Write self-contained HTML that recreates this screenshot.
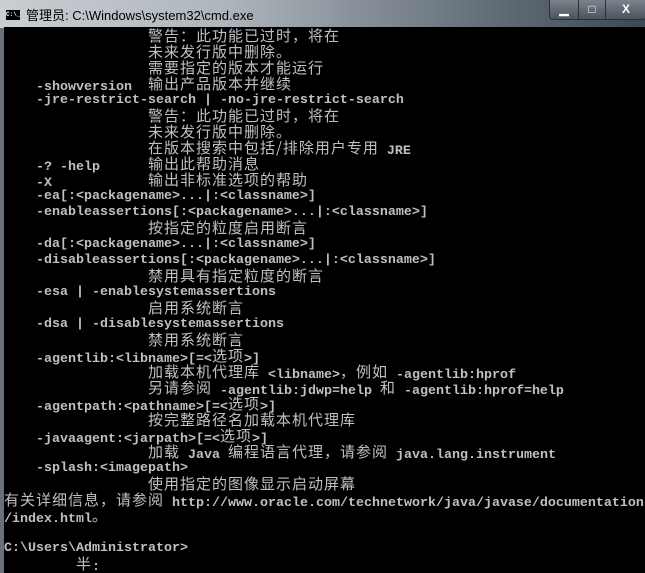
<!DOCTYPE html>
<html><head><meta charset="utf-8"><style>
html,body{margin:0;padding:0;width:645px;height:571px;overflow:hidden;background:#6a7078}
.title{position:absolute;left:0;top:0;width:645px;height:28px;background:linear-gradient(90deg,#c9ced3 0%,#aeb5bc 35%,#6d7781 70%,#3e4852 100%)}
.title .t{position:absolute;left:26px;top:5px;font:13px "Liberation Sans","Noto Sans CJK SC",sans-serif;color:#000}
.icon{position:absolute;left:5px;top:9px;width:14px;height:10px;background:#000;border:1px solid #ccc;color:#fff;font:bold 6px "Liberation Mono",monospace;line-height:10px}
.btns{position:absolute;right:-2px;top:0;height:19px;width:96px;border:1px solid #2a3038;border-top:none;border-radius:0 0 4px 4px;background:linear-gradient(#7a838c,#4b545d)}
.b{position:absolute;top:0;height:19px;color:#fff;font:bold 12px "Liberation Sans",sans-serif;text-align:center;line-height:18px}
.con{position:absolute;left:4px;top:27px;width:645px;height:544px;background:#000;overflow:hidden;padding-top:2px}
.con div{height:16px;overflow:visible;font:bold 13.33px/16px "Liberation Mono",monospace;color:#c0c0c0;white-space:pre}
.c{font:15px/16px "Noto Sans CJK SC","WenQuanYi Zen Hei",sans-serif;letter-spacing:1px;font-weight:normal;vertical-align:baseline;position:relative;top:-1px}
</style></head><body>
<div class="title"><div class="icon">C:\_</div><div class="t">管理员: C:\Windows\system32\cmd.exe</div>
<div class="btns"><div class="b" style="left:0;width:28px;border-right:1px solid #2a3038">▁</div><div class="b" style="left:29px;width:26px;border-right:1px solid #2a3038">□</div><div class="b" style="left:56px;width:40px">X</div></div></div>
<div class="con">
<div>                  <span class="c">警告：此功能已过时，将在</span></div>
<div>                  <span class="c">未来发行版中删除。</span></div>
<div>                  <span class="c">需要指定的版本才能运行</span></div>
<div>    -showversion  <span class="c">输出产品版本并继续</span></div>
<div>    -jre-restrict-search | -no-jre-restrict-search</div>
<div>                  <span class="c">警告：此功能已过时，将在</span></div>
<div>                  <span class="c">未来发行版中删除。</span></div>
<div>                  <span class="c">在版本搜索中包括/排除用户专用</span> JRE</div>
<div>    -? -help      <span class="c">输出此帮助消息</span></div>
<div>    -X            <span class="c">输出非标准选项的帮助</span></div>
<div>    -ea[:&lt;packagename&gt;...|:&lt;classname&gt;]</div>
<div>    -enableassertions[:&lt;packagename&gt;...|:&lt;classname&gt;]</div>
<div>                  <span class="c">按指定的粒度启用断言</span></div>
<div>    -da[:&lt;packagename&gt;...|:&lt;classname&gt;]</div>
<div>    -disableassertions[:&lt;packagename&gt;...|:&lt;classname&gt;]</div>
<div>                  <span class="c">禁用具有指定粒度的断言</span></div>
<div>    -esa | -enablesystemassertions</div>
<div>                  <span class="c">启用系统断言</span></div>
<div>    -dsa | -disablesystemassertions</div>
<div>                  <span class="c">禁用系统断言</span></div>
<div>    -agentlib:&lt;libname&gt;[=&lt;<span class="c">选项</span>&gt;]</div>
<div>                  <span class="c">加载本机代理库</span> &lt;libname&gt;<span class="c">，例如</span> -agentlib:hprof</div>
<div>                  <span class="c">另请参阅</span> -agentlib:jdwp=help <span class="c">和</span> -agentlib:hprof=help</div>
<div>    -agentpath:&lt;pathname&gt;[=&lt;<span class="c">选项</span>&gt;]</div>
<div>                  <span class="c">按完整路径名加载本机代理库</span></div>
<div>    -javaagent:&lt;jarpath&gt;[=&lt;<span class="c">选项</span>&gt;]</div>
<div>                  <span class="c">加载</span> Java <span class="c">编程语言代理，请参阅</span> java.lang.instrument</div>
<div>    -splash:&lt;imagepath&gt;</div>
<div>                  <span class="c">使用指定的图像显示启动屏幕</span></div>
<div><span class="c">有关详细信息，请参阅</span> http://www.oracle.com/technetwork/java/javase/documentation</div>
<div>/index.html<span class="c">。</span></div>
<div> </div>
<div>C:\Users\Administrator&gt;</div>
<div>         <span class="c">半</span>:</div>
</div>
</body></html>
